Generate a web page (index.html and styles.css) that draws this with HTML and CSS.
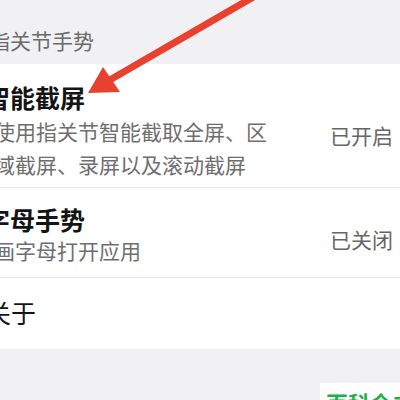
FILE: index.html
```html
<!DOCTYPE html>
<html lang="zh-CN">
<head>
<meta charset="utf-8">
<link rel="stylesheet" href="styles.css">
</head>
<body>
<div class="page">
  <div class="section-header">指关节手势</div>
  <div class="group">
    <div class="item item-first">
      <div class="item-main">
        <div class="item-title">智能截屏</div>
        <div class="item-desc">使用指关节智能截取全屏、区域截屏、录屏以及滚动截屏</div>
      </div>
      <div class="item-status">已开启</div>
    </div>
    <div class="item item-second">
      <div class="item-main">
        <div class="item-title">字母手势</div>
        <div class="item-desc">画字母打开应用</div>
      </div>
      <div class="item-status">已关闭</div>
    </div>
    <div class="item item-last">
      <div class="item-main">
        <div class="item-title item-title-plain">关于</div>
      </div>
    </div>
  </div>
  <svg class="arrow" width="400" height="400" viewBox="0 0 400 400">
    <line x1="262" y1="-8" x2="108" y2="81" stroke="#e8412f" stroke-width="7"/>
    <polygon points="88,93 103,67 120,92" fill="#e8412f"/>
  </svg>
  <div class="watermark">百科全书</div>
</div>
</body>
</html>
```

FILE: styles.css
```css
html, body {
  margin: 0;
  padding: 0;
}
body {
  background: #f1f1f3;
  font-family: "Noto Sans CJK SC", "Noto Sans", sans-serif;
  width: 400px;
  height: 400px;
  overflow: hidden;
}
.page {
  position: relative;
  width: 400px;
  height: 400px;
  overflow: hidden;
}
.section-header {
  height: 64px;
  box-sizing: border-box;
  padding-top: 28px;
  margin-left: -11px;
  font-size: 21px;
  line-height: 24px;
  color: #6a6a6a;
}
.group {
  background: #ffffff;
}
.item {
  display: flex;
  align-items: center;
  border-bottom: 1px solid #e6e6e8;
}
.item-last {
  border-bottom: none;
  padding: 19px 0 22px;
}
.item-first {
  padding: 18px 0 6px;
}
.item-second {
  padding: 16px 0 10px;
}
.item-main {
  flex: 1;
  min-width: 0;
}
.item-title {
  margin-left: -15px;
  font-size: 25px;
  line-height: 30px;
  font-weight: 700;
  color: #141414;
}
.item-title-plain {
  font-weight: 400;
  margin-left: -14px;
}
.item-desc {
  margin-left: -6px;
  width: 280px;
  font-size: 21px;
  line-height: 33px;
  color: #6e6e6e;
}
.item-first .item-desc {
  margin-top: 3px;
}
.item-status {
  padding: 6px 7px 0 0;
  font-size: 21px;
  line-height: 24px;
  color: #666666;
}
.arrow {
  position: absolute;
  top: 0;
  left: 0;
  pointer-events: none;
}
.watermark {
  position: absolute;
  left: 320px;
  top: 383px;
  width: 90px;
  height: 30px;
  box-sizing: border-box;
  padding: 6px 0 0 6px;
  background: #ffffff;
  color: #22b04a;
  font-size: 22px;
  line-height: 26px;
  font-weight: 700;
  white-space: nowrap;
}
```
